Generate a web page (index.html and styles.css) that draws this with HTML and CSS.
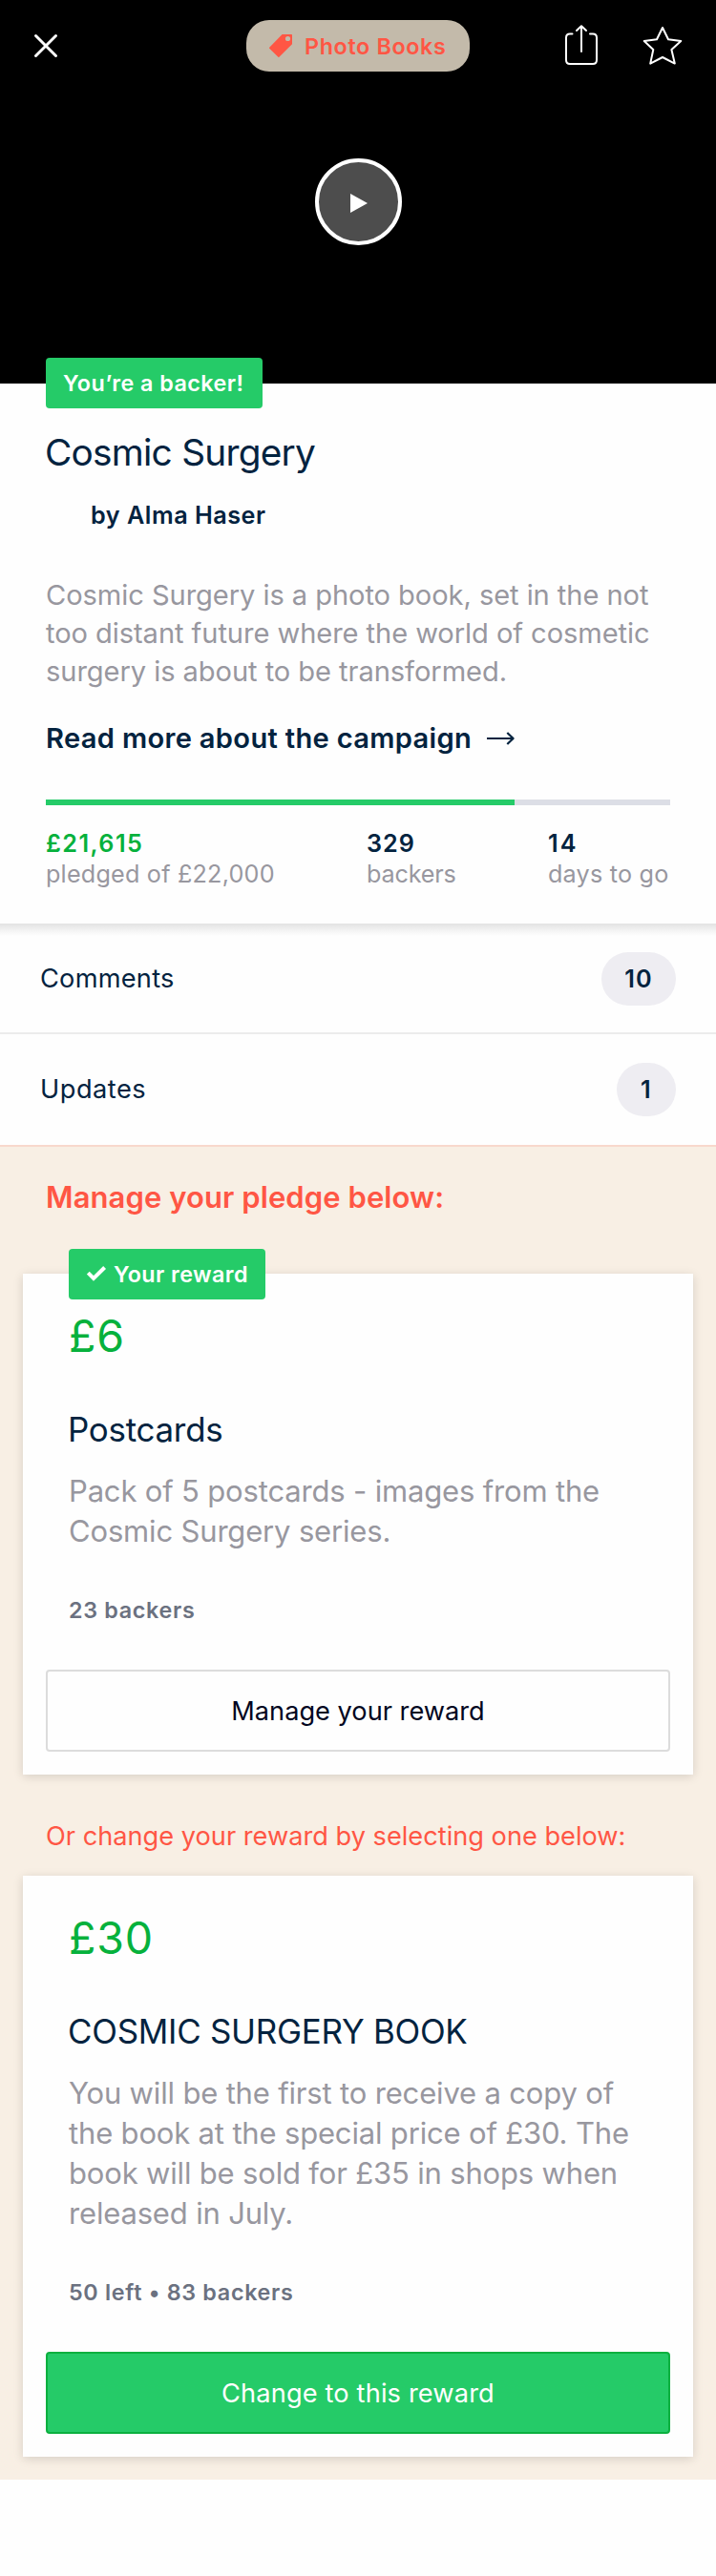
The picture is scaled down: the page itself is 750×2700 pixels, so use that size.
FILE: index.html
```html
<!DOCTYPE html>
<html lang="en">
<head>
<meta charset="utf-8">
<title>Cosmic Surgery</title>
<link rel="stylesheet" href="styles.css">
</head>
<body>
<main class="page">
  <section class="hero">
    <header class="topbar">
      <svg class="icon-close" width="24" height="24" viewBox="0 0 24 24" fill="none" stroke="#fff" stroke-width="3" stroke-linecap="round"><path d="M1.5 1.5l21 21M22.5 1.5l-21 21"/></svg>
      <div class="category">
        <svg width="24" height="24" viewBox="0 0 24 24"><path fill="#ff5644" fill-rule="evenodd" d="M13.6 0H23.2Q24 0 24 .8V10.2L10.4 23.8Q9.9 24.3 9.4 23.8L.2 14.7Q-.2 14.2.2 13.7ZM19.5 1.9a2.6 2.6 0 1 0 0 5.2a2.6 2.6 0 0 0 0-5.2Z"/></svg>
        <span class="category-name">Photo Books</span>
      </div>
      <div class="actions">
        <svg width="34" height="42" viewBox="0 0 34 42" fill="none" stroke="#fff" stroke-width="2" stroke-linecap="round" stroke-linejoin="round"><path d="M7.5 9.5H5Q1 9.5 1 13.5V37Q1 41 5 41H29Q33 41 33 37V13.5Q33 9.5 29 9.5H26M17 28V1.5M12 6l5-4.8L22 6"/></svg>
        <svg width="40" height="40" viewBox="0 0 40 40" fill="none" stroke="#fff" stroke-width="2" stroke-linejoin="round"><path d="M20 1L26 13.3L39.3 14.9L29.4 24L32.8 38.6L20 32L7.2 38.6L10.3 24L.7 14.9L14 13.3Z"/></svg>
      </div>
    </header>
    <div class="play"><svg width="18" height="20" viewBox="0 0 18 20"><path fill="#fff" d="M0 0L18 10L0 20Z"/></svg></div>
  </section>

  <section class="summary">
    <div class="badge badge-backer">You’re a backer!</div>
    <h1 class="title">Cosmic Surgery</h1>
    <p class="author">by Alma Haser</p>
    <p class="blurb"><span class="blurb-text">Cosmic Surgery is a photo book, set in the not<br>too distant future where the world of cosmetic<br>surgery is about to be transformed.</span></p>
    <a class="more"><span>Read more about the campaign</span>
      <svg width="29" height="14" viewBox="0 0 29 14" fill="none" stroke="#03233f" stroke-width="2.2" stroke-linejoin="round"><path d="M0 7H28M21.3 1L27.6 7L21.3 13"/></svg></a>
    <div class="progress"><div class="progress-fill" style="width:490.7px"></div></div>
    <div class="stats">
      <div><div class="stat-num raised">£21,615</div><div class="stat-label">pledged of £22,000</div></div>
      <div><div class="stat-num">329</div><div class="stat-label tight">backers</div></div>
      <div><div class="stat-num days">14</div><div class="stat-label">days to go</div></div>
    </div>
  </section>

  <nav class="links">
    <div class="link comments"><span>Comments</span><span class="count">10</span></div>
    <div class="link updates"><span>Updates</span><span class="count">1</span></div>
  </nav>

  <section class="pledges">
    <h2 class="manage">Manage your pledge below:</h2>
    <article class="card card-current">
      <div class="badge badge-reward"><svg width="20" height="16" viewBox="0 0 20 16" fill="none" stroke="#fff" stroke-width="4"><path d="M1.3 7.2L7 13L18.6 1.5"/></svg><span>Your reward</span></div>
      <div class="price">£6</div>
      <h3 class="reward">Postcards</h3>
      <p class="desc">Pack of 5 postcards - images from the<br>Cosmic Surgery series.</p>
      <div class="meta">23 backers</div>
      <div class="btn btn-plain">Manage your reward</div>
    </article>
    <h2 class="change">Or change your reward by selecting one below:</h2>
    <article class="card">
      <div class="price">£30</div>
      <h3 class="reward">COSMIC SURGERY BOOK</h3>
      <p class="desc">You will be the first to receive a copy of<br>the book at the special price of £30. The<br>book will be sold for £35 in shops when<br>released in July.</p>
      <div class="meta">50 left • 83 backers</div>
      <div class="btn btn-green">Change to this reward</div>
    </article>
  </section>
</main>
</body>
</html>
```
FILE: styles.css
```css
* { box-sizing: border-box; }
body { margin: 0; background: #fefefe; color: #03233f; font-family: Inter, "Liberation Sans", sans-serif; }
h1, h2, h3, p { margin: 0; font-weight: 400; }
svg { display: block; flex: none; overflow: visible; }
.page { width: 750px; height: 2700px; white-space: nowrap; }

.hero { height: 402px; background: #000; }
.topbar { display: grid; grid-template-columns: 1fr auto 1fr; align-items: center; height: 96px; padding: 0 36px; }
.category { display: flex; align-items: center; gap: 13px; width: 234px; height: 54px; padding-left: 24px; border-radius: 24px; background: #c3baaa; color: #ff5644; }
.category-name { font-size: 23.3px; font-weight: 600; letter-spacing: 0.65px; line-height: 30px; padding-top: 2px; }
.actions { display: flex; justify-content: flex-end; align-items: center; gap: 48px; }
.actions svg:first-child { margin-bottom: 2px; }
.play { display: flex; align-items: center; justify-content: center; width: 91px; height: 91px; margin: 70px auto 0; padding: 3px 0 0 2px; border: 4px solid #fff; border-radius: 50%; background: #4d4d4d; }

.summary { height: 566px; padding: 0 48px; }
.badge { display: flex; align-items: center; height: 53px; border-radius: 4px; background: #25cb68; color: #fff; font-size: 23.3px; font-weight: 600; line-height: 53px; }
.badge-backer { position: relative; top: -27px; width: 227px; padding-left: 18px; letter-spacing: 0.47px; }
.title { margin: -5px 0 0 -1px; font-size: 38.8px; line-height: 48px; letter-spacing: -0.77px; }
.author { margin-top: 26px; padding-left: 47px; font-size: 25.2px; font-weight: 600; line-height: 32px; letter-spacing: 0.52px; }
.blurb { margin-top: 48px; color: #98979f; font-size: 29.1px; line-height: 40px; letter-spacing: -0.07px; }
.more { display: flex; align-items: center; gap: 16px; margin-top: 32px; font-size: 29.1px; font-weight: 600; line-height: 36px; letter-spacing: 0.32px; }
.progress { height: 6px; margin-top: 46px; background: #dcdee6; }
.progress-fill { height: 6px; background: #25cb68; }
.stats { display: grid; grid-template-columns: 336px 190px auto; margin-top: 24px; font-size: 25.2px; line-height: 32px; }
.stat-num { font-weight: 600; letter-spacing: 1px; }
.raised { color: #06b13c; letter-spacing: 1.45px; }
.days { letter-spacing: 2px; }
.stat-label { color: #98979f; letter-spacing: 0.2px; }
.tight { letter-spacing: -0.19px; }

.links { background: linear-gradient(#e2e2e2, #f3f3f3 7px, #fefefe 13px); }
.link { display: flex; align-items: center; justify-content: space-between; padding: 0 42px; font-size: 27.2px; line-height: 36px; }
.comments { height: 116px; border-bottom: 2px solid #ececec; padding-top: 2px; letter-spacing: 0.24px; }
.updates { height: 118px; border-bottom: 2px solid #f8d8cc; letter-spacing: 0.5px; }
.count { padding: 0 24px; border-radius: 28px; background: #eeedf2; font-size: 25.2px; font-weight: 600; line-height: 56px; letter-spacing: 1.3px; min-width: 62px; text-align: center; }

.pledges { height: 1397px; padding: 33px 24px 0; background: #f8efe4; }
.manage { padding-left: 24px; color: #ff5644; font-size: 31px; font-weight: 600; line-height: 40px; letter-spacing: 0.08px; }
.card { position: relative; padding: 37px 24px 24px; background: #fefefe; box-shadow: 0 2px 10px rgba(0, 0, 0, 0.14); }
.card-current { margin-top: 60px; }
.badge-reward { position: absolute; left: 48px; top: -26px; width: 206px; padding-left: 19px; gap: 8px; letter-spacing: 0.43px; }
.badge-reward svg { margin-bottom: 2px; }
.price { padding-left: 24px; color: #06b13c; font-size: 46.5px; line-height: 56px; letter-spacing: 0.8px; }
.reward { margin-top: 48px; padding-left: 23px; font-size: 34.9px; line-height: 44px; letter-spacing: -0.25px; }
.desc { margin-top: 22px; padding-left: 24px; color: #98979f; font-size: 31px; line-height: 42px; letter-spacing: -0.17px; }
.meta { margin-top: 47px; padding-left: 24px; color: #6b7180; font-size: 23.3px; font-weight: 600; line-height: 30px; letter-spacing: 0.7px; }
.btn { height: 86px; margin-top: 47px; border: 2px solid; border-radius: 4px; font-size: 27.2px; line-height: 83px; text-align: center; }
.btn-plain { border-color: #dcdcdc; color: #020621; }
.btn-green { border-color: #0bb03f; background: #25cb68; color: #fff; letter-spacing: 0.15px; }
.change { margin: 47px 0 23px; padding-left: 24px; color: #ff5644; font-size: 27.2px; line-height: 36px; }
```
